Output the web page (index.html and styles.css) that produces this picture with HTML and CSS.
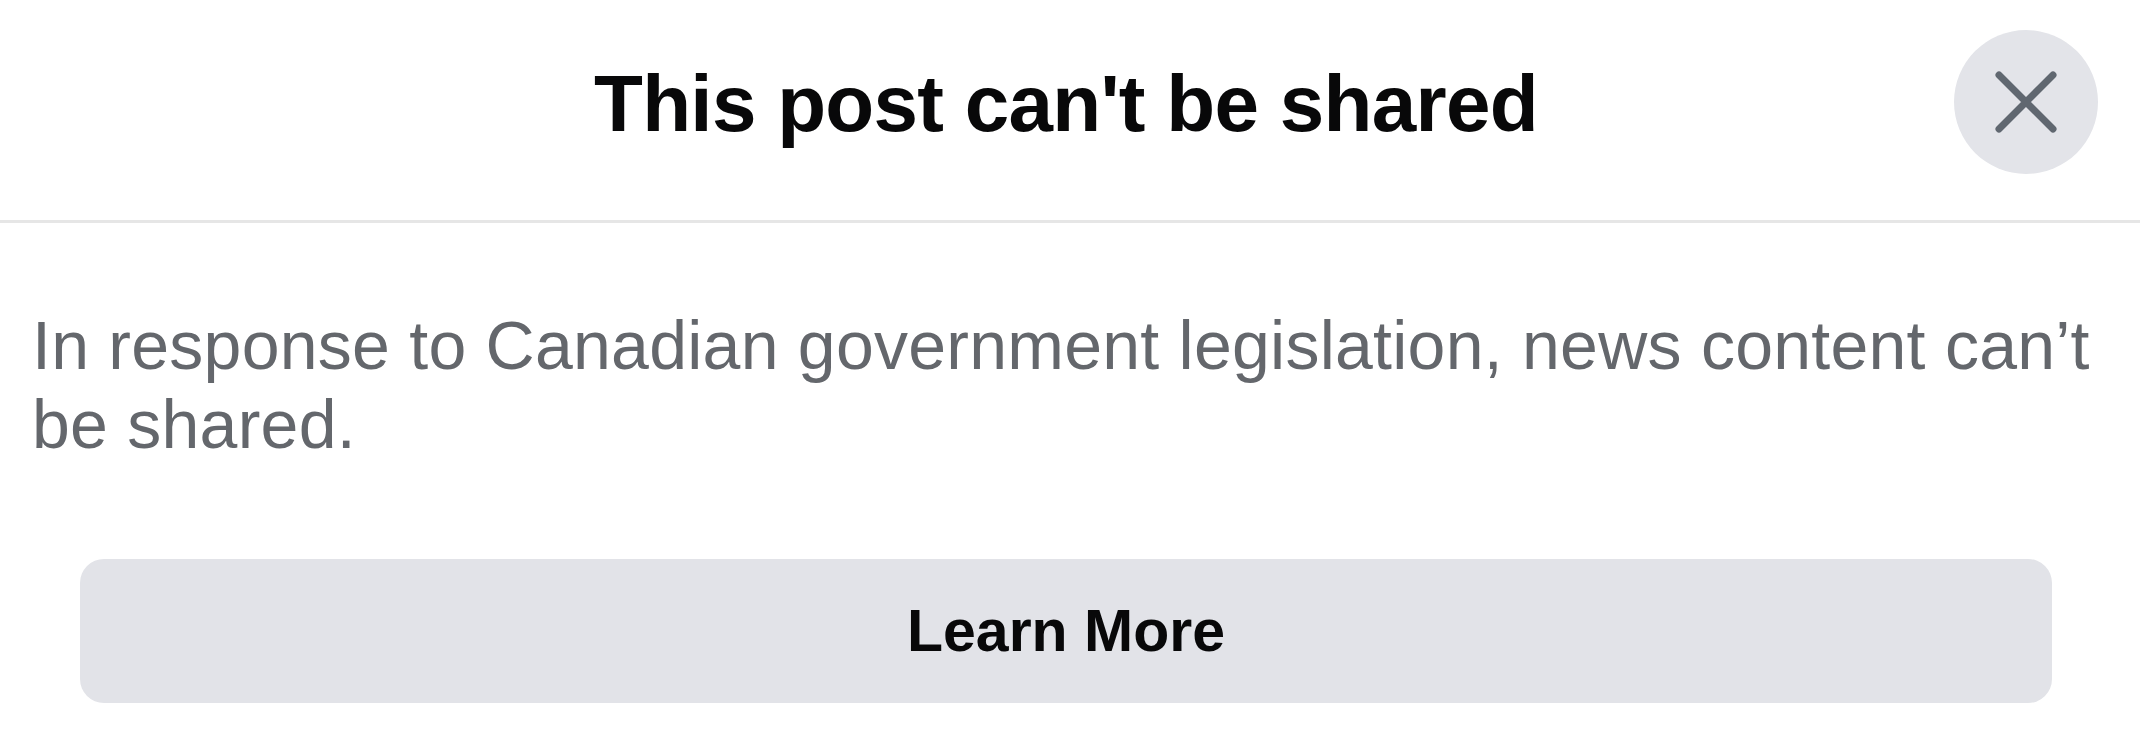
FILE: index.html
```html
<!DOCTYPE html>
<html lang="en">
<head>
<meta charset="utf-8">
<title>This post can't be shared</title>
<link rel="stylesheet" href="styles.css">
</head>
<body>
<div class="sheet">
  <header class="header">
    <div class="spacer"></div>
    <h1 class="title">This post can't be shared</h1>
    <div class="close-cell">
      <button class="close" aria-label="Close">
        <svg class="close-icon" viewBox="0 0 64 64" width="64" height="64" aria-hidden="true">
          <path d="M5 5 L59 59 M59 5 L5 59" stroke="#606770" stroke-width="7" stroke-linecap="round" fill="none"/>
        </svg>
      </button>
    </div>
  </header>
  <p class="message">In response to Canadian government legislation, news content can’t be shared.</p>
  <button class="learn">Learn More</button>
</div>
</body>
</html>
```

FILE: styles.css
```css
html, body {
  margin: 0;
  padding: 0;
  background: #ffffff;
}

.sheet {
  width: 2140px;
  font-family: "Liberation Sans", Arial, sans-serif;
}

.header {
  box-sizing: border-box;
  height: 223px;
  padding: 0 42px 16px 34px;
  border-bottom: 3px solid #e6e6e6;
  display: grid;
  grid-template-columns: 1fr auto 1fr;
  align-items: center;
}

.title {
  margin: 0;
  padding-top: 3px;
  font-size: 80px;
  line-height: 100px;
  font-weight: 700;
  letter-spacing: -0.7px;
  color: #080809;
  white-space: nowrap;
}

.close-cell {
  display: flex;
  justify-content: flex-end;
}

.close {
  width: 144px;
  height: 144px;
  border: none;
  border-radius: 50%;
  background: #e3e4e9;
  padding: 0;
  display: flex;
  align-items: center;
  justify-content: center;
}

.close-icon {
  width: 64px;
  height: 64px;
  display: block;
}

.message {
  margin: 0;
  padding: 83px 38px 0 32px;
  font-size: 68px;
  line-height: 79px;
  letter-spacing: 0.25px;
  color: #64676c;
}

.learn {
  display: flex;
  align-items: center;
  justify-content: center;
  box-sizing: border-box;
  width: 1972px;
  height: 144px;
  margin: 95px 0 0 80px;
  border: none;
  border-radius: 24px;
  background: #e2e3e8;
  font-family: "Liberation Sans", Arial, sans-serif;
  font-size: 59px;
  font-weight: 700;
  color: #080809;
  padding: 0;
}
```
